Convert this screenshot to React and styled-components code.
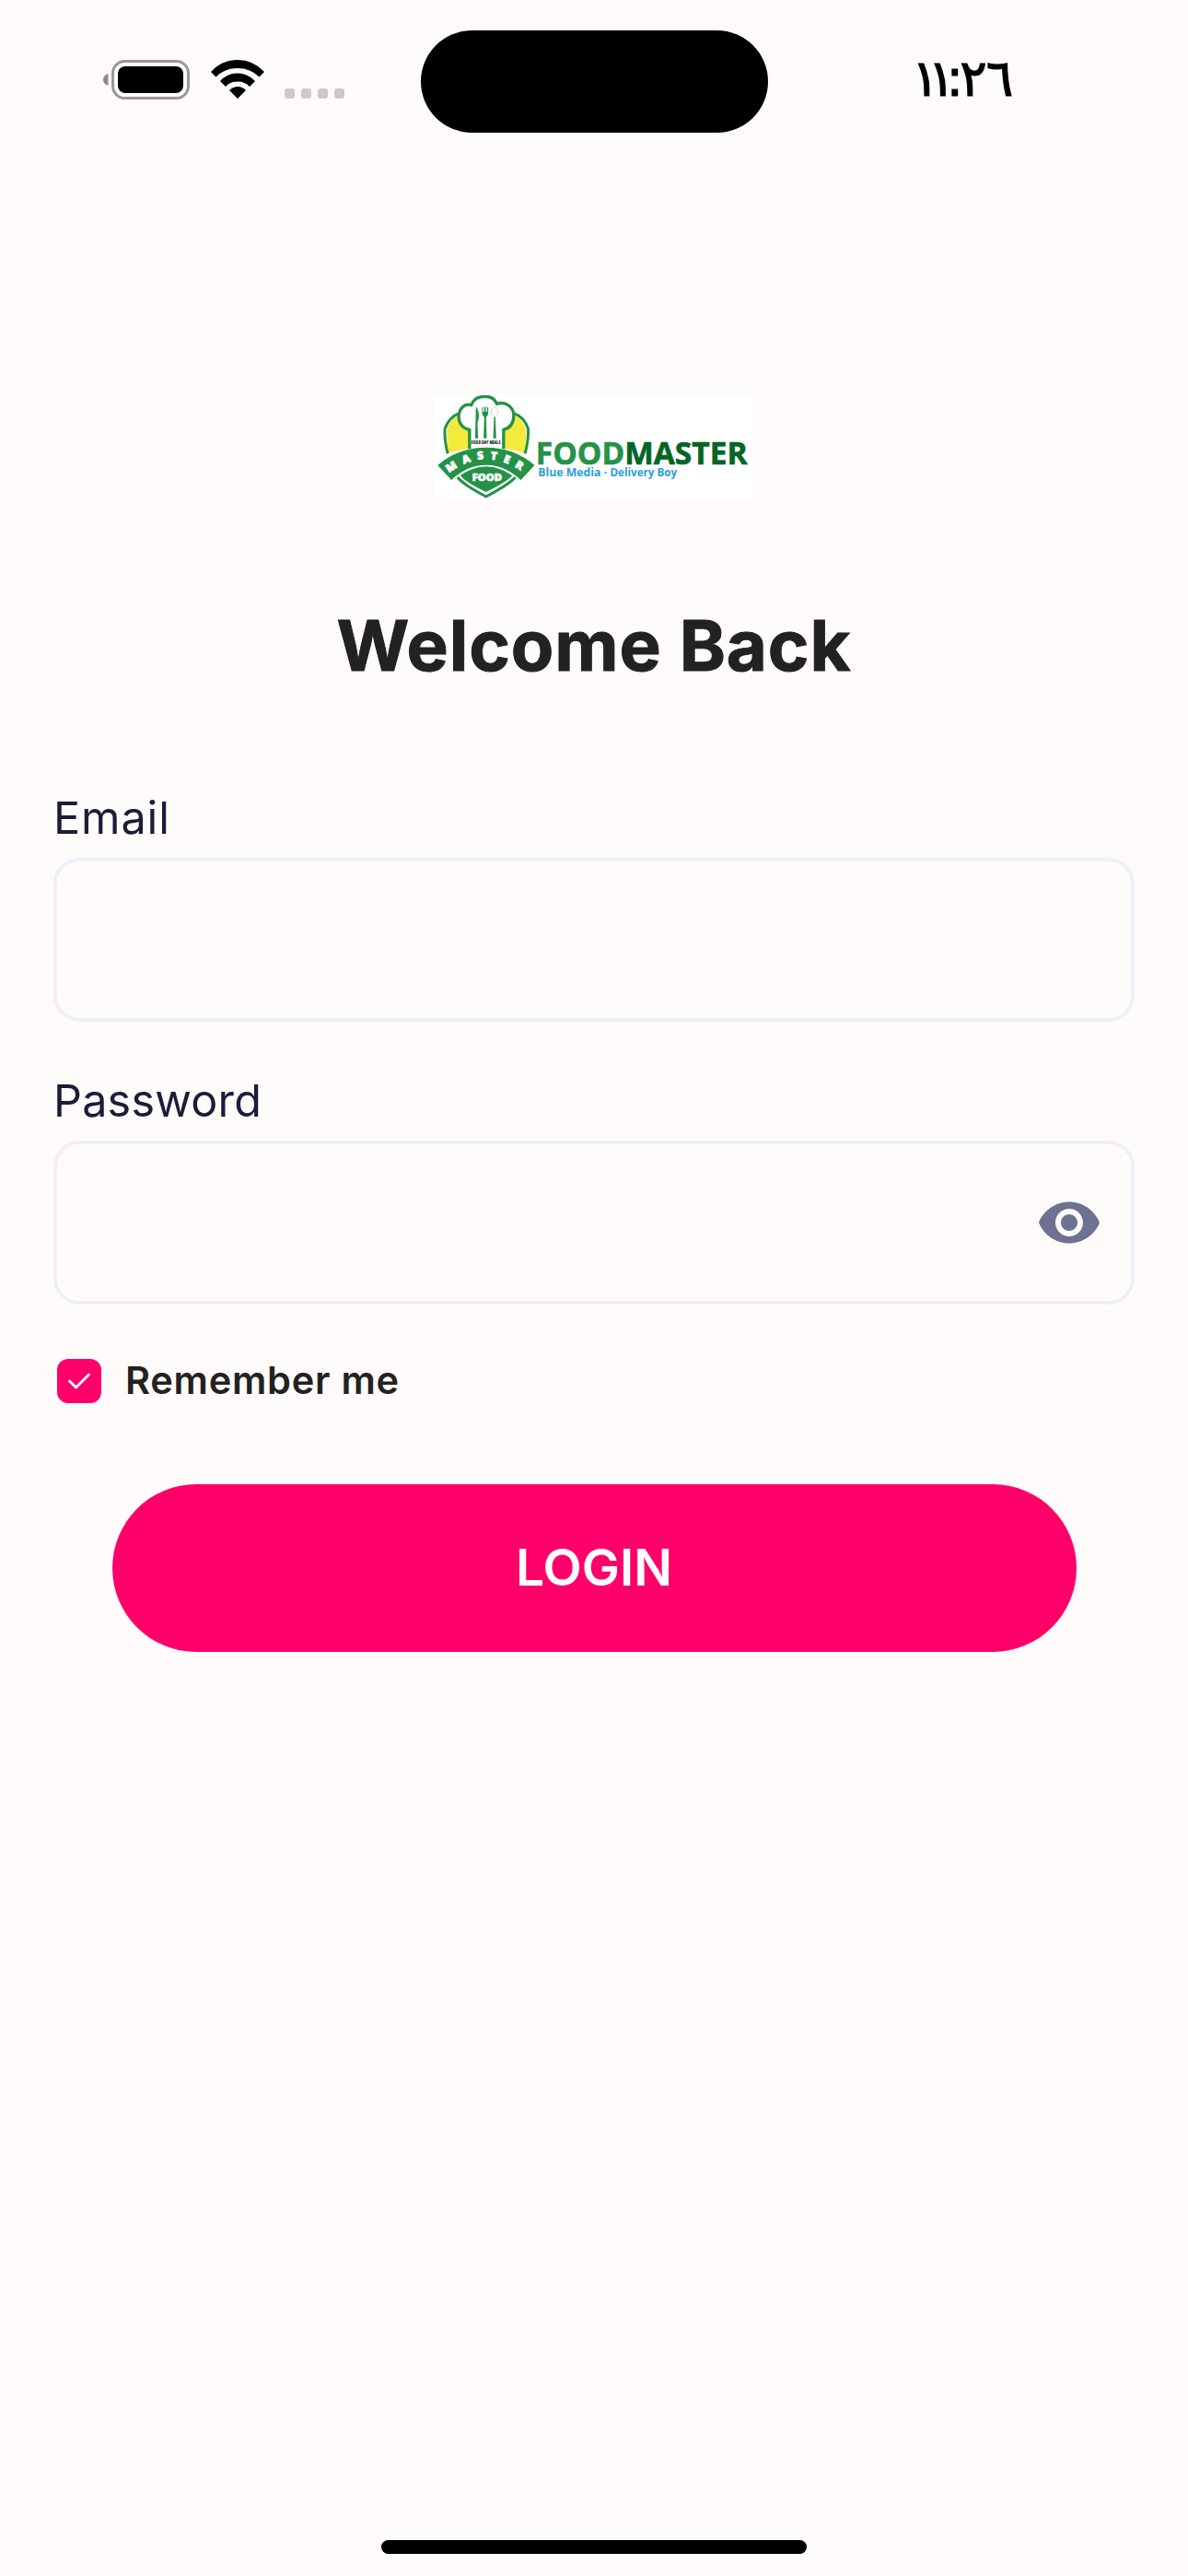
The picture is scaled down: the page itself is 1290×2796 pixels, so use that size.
import React, { useState } from "react";
import styled, { createGlobalStyle } from "styled-components";

const GlobalStyle = createGlobalStyle`
  *, *::before, *::after { box-sizing: border-box; }
  body { margin: 0; background: #fffbfa; }
`;

const Screen = styled.div`
  display: flex;
  flex-direction: column;
  width: 1290px;
  height: 2796px;
  background: #fffbfa;
  color: #222;
  font-family: Inter, "Liberation Sans", sans-serif;
  overflow: hidden;
`;

const StatusBar = styled.header`
  display: grid;
  grid-template-columns: 456px 378px 1fr;
  height: 177px;
  padding-top: 33px;
`;

const StatusIcons = styled.div`
  display: flex;
  align-items: flex-start;
  padding: 32px 0 0 112px;
`;

const Battery = styled.svg`
  width: 94px;
  height: 43px;
`;

const Wifi = styled.svg`
  width: 58px;
  height: 43px;
  margin-left: 23px;
`;

const Signal = styled.div`
  display: flex;
  gap: 7px;
  margin: 31px 0 0 22px;
`;

const SignalDot = styled.span`
  width: 11px;
  height: 11px;
  border-radius: 3px;
  background: #cccac9;
`;

const Island = styled.div`
  height: 111px;
  width: 377px;
  justify-self: center;
  border-radius: 56px;
  background: #000;
`;

const Clock = styled.time`
  display: flex;
  padding: 22px 0 0 156px;
  font: 500 55px/60px "DejaVu Sans", sans-serif;
  -webkit-text-stroke: 1.2px #000;
  color: #000;
`;

const Digit = styled.span`
  margin-right: ${(p) => p.$kern}px;
`;

const Main = styled.main`
  flex: 1;
  display: flex;
  flex-direction: column;
  padding: 252px 58px 0;
`;

const Logo = styled.svg`
  width: 348px;
  height: 112px;
  align-self: center;
  background: #fff;
`;

const Title = styled.h1`
  margin: 114px 0 0;
  text-align: center;
  font-size: 76px;
  font-weight: 700;
  line-height: 90px;
  letter-spacing: 0.9px;
  -webkit-text-stroke: 1px #222;
`;

const Form = styled.form`
  display: flex;
  flex-direction: column;
  margin-top: 113px;
`;

const Fields = styled.div`
  display: flex;
  flex-direction: column;
  gap: 56px;
`;

const Field = styled.div`
  display: flex;
  flex-direction: column;
  gap: 13px;
`;

const Label = styled.label`
  height: 60px;
  line-height: 60px;
  font-size: 48.5px;
  color: #1c1c3a;
  letter-spacing: ${(p) => p.$tracking};
`;

const InputBox = styled.div`
  display: flex;
  align-items: center;
  height: 178px;
  padding: 0 31px;
  border: 4px solid #eef0f7;
  border-radius: 28px;
`;

const Input = styled.input`
  flex: 1;
  min-width: 0;
  height: 100%;
  border: 0;
  outline: 0;
  padding: 0;
  background: transparent;
  font: inherit;
  font-size: 48px;
`;

const IconButton = styled.button`
  display: flex;
  padding: 0;
  border: 0;
  background: none;
  color: #6e7191;
`;

const Remember = styled.label`
  display: flex;
  align-items: center;
  gap: 26px;
  height: 60px;
  margin: 53px 0 0 4px;
  font-size: 41.5px;
  font-weight: 600;
  letter-spacing: 0.75px;
`;

const RememberText = styled.span`
  padding-bottom: 3px;
`;

const CheckBox = styled.span`
  display: flex;
  width: 48px;
  height: 48px;
  border-radius: 12px;
  background: #ff006b;
`;

const LoginButton = styled.button`
  width: 1047px;
  height: 182px;
  margin: 82px auto 0;
  padding: 0 0 2px;
  border: 0;
  border-radius: 91px;
  background: #ff006b;
  color: #fff;
  font: 600 55px/180px Inter, sans-serif;
`;

const HomeIndicator = styled.footer`
  align-self: center;
  width: 462px;
  height: 15px;
  margin-bottom: 24px;
  border-radius: 8px;
  background: #000;
`;

const green = "#259247";

const clockDigits = [
  { char: "١", kern: -12 },
  { char: "١", kern: -9.5 },
  { char: ":", kern: -4 },
  { char: "٢", kern: -1 },
  { char: "٦", kern: 0 },
];

function FoodMasterLogo() {
  return (
    <Logo viewBox="34.5 42 1044 336" fontFamily="'Open Sans', 'Noto Sans', sans-serif">
      <path d="M84 230Q76 188 78 153Q86 122 116 107L126 140L150 157V215Q115 220 84 230Z" fill="#f4ea3d" />
      <path d="M329 230Q337 188 335 153Q327 122 296 107L288 140L262 157V215Q298 220 329 230Z" fill="#f4ea3d" />
      <path d="M80 232Q68 185 71 151Q84 113 118 100M332 232Q344 185 342 151Q330 113 294 100" fill="none" stroke={green} strokeWidth="9" />
      <path d="M151 217V154C122 149 111 123 118 98C125 75 143 69 157 74C164 52 182 46 202 46C222 46 234 56 240 70C270 60 296 82 295 110C294 137 279 150 262 154V217" fill="#fff" stroke={green} strokeWidth="10" strokeLinejoin="round" />
      <g fill={green}>
        <path d="M172 79C183 92 184 116 177 132L179 182H169Z" />
        <path d="M192 80H195V96H199V80H204V96H208V80H212V101Q211 110 205 113L207 182H197L199 113Q193 110 192 101Z" />
        <path d="M231 112H235L238 182H228Z" />
      </g>
      <ellipse cx="233" cy="96" rx="11" ry="16" fill="#fff" stroke="#a8cdb1" strokeWidth="2" />
      <text x="157" y="202" fontSize="13" fontWeight="800" fill="#222" textLength="95" lengthAdjust="spacingAndGlyphs">FOOD DAY MEALS</text>
      <path d="M47 270Q113 212 205 212Q297 212 363 270L318 318Q266 269 205 269Q144 269 92 318Z" fill={green} />
      <path id="ribbon" d="M84 295Q205 205 328 295" fill="none" />
      <text fontSize="36" fontWeight="800" fill="#fff" stroke="#fff" strokeWidth="2">
        <textPath href="#ribbon" textLength="252" lengthAdjust="spacing">MASTER</textPath>
      </text>
      <path d="M112 309Q128 331 205 372Q282 331 300 309" fill="none" stroke={green} strokeWidth="9" />
      <path d="M121 303Q205 245 290 303Q277 322 205 357Q134 323 121 303Z" fill={green} />
      <text x="160" y="320" fontSize="30" fontWeight="800" fill="#fff" stroke="#fff" strokeWidth="2" textLength="96" lengthAdjust="spacingAndGlyphs">FOOD</text>
      <text x="367" y="268" fontSize="102" fontWeight="700" fill={green} stroke={green} strokeWidth="2" textLength="689" lengthAdjust="spacingAndGlyphs">
        FOOD<tspan fill="#056525" stroke="#056525">MASTER</tspan>
      </text>
      <text x="374" y="306" fontSize="39" fontWeight="700" fill="#2a9fd8" textLength="453" lengthAdjust="spacingAndGlyphs">
        Blue Media · <tspan fontSize="37">Delivery Boy</tspan>
      </text>
    </Logo>
  );
}

export default function App() {
  const [visible, setVisible] = useState(false);
  return (
    <>
      <GlobalStyle />
      <Screen>
        <StatusBar>
          <StatusIcons>
            <Battery viewBox="0 0 94 43">
              <path d="M5.500 15V28Q0 26 0 21.500Q0 17 5.500 15Z" fill="#8c8a8a" />
              <rect x="10.500" y="1.500" width="82" height="40" rx="13" fill="none" stroke="#999797" strokeWidth="3" />
              <rect x="16" y="7" width="71" height="29" rx="8" />
            </Battery>
            <Wifi viewBox="0 0 58 43">
              <path d="M0 13Q12 0 29 0Q46 0 58 13L52.500 18.500Q43 9 29 9Q15 9 5.500 18.500Z" />
              <path d="M10 23Q18 14.500 29 14.500Q40 14.500 48 23L42 29Q37 23.500 29 23.500Q21 23.500 16 29Z" />
              <path d="M20 33Q24 29 29 29Q34 29 38 33L29 42Z" />
            </Wifi>
            <Signal>
              <SignalDot /><SignalDot /><SignalDot /><SignalDot />
            </Signal>
          </StatusIcons>
          <Island />
          <Clock>
            {clockDigits.map((d, i) => (
              <Digit key={i} $kern={d.kern}>{d.char}</Digit>
            ))}
          </Clock>
        </StatusBar>
        <Main>
          <FoodMasterLogo />
          <Title>Welcome Back</Title>
          <Form onSubmit={(e) => e.preventDefault()}>
            <Fields>
              <Field>
                <Label htmlFor="email" $tracking="0.9px">Email</Label>
                <InputBox><Input id="email" /></InputBox>
              </Field>
              <Field>
                <Label htmlFor="password" $tracking="0.2px">Password</Label>
                <InputBox>
                  <Input id="password" type={visible ? "text" : "password"} />
                  <IconButton type="button" onClick={() => setVisible(!visible)}>
                    <svg width="72" height="72" viewBox="0 0 24 24" fill="currentColor">
                      <path d="M12 4.500C7 4.500 2.730 7.610 1 12c1.730 4.390 6 7.500 11 7.500s9.270-3.110 11-7.500c-1.730-4.390-6-7.500-11-7.500zM12 17c-2.760 0-5-2.240-5-5s2.240-5 5-5 5 2.240 5 5-2.240 5-5 5zm0-8c-1.660 0-3 1.340-3 3s1.340 3 3 3 3-1.340 3-3-1.340-3-3-3z" />
                    </svg>
                  </IconButton>
                </InputBox>
              </Field>
            </Fields>
            <Remember>
              <CheckBox>
                <svg width="48" height="48" viewBox="0 0 48 48" fill="none" stroke="#fff" strokeWidth="2.800" strokeLinecap="round" strokeLinejoin="round">
                  <path d="M13.500 24L20.500 31L34.500 17" />
                </svg>
              </CheckBox>
              <RememberText>Remember me</RememberText>
            </Remember>
            <LoginButton>LOGIN</LoginButton>
          </Form>
        </Main>
        <HomeIndicator />
      </Screen>
    </>
  );
}
